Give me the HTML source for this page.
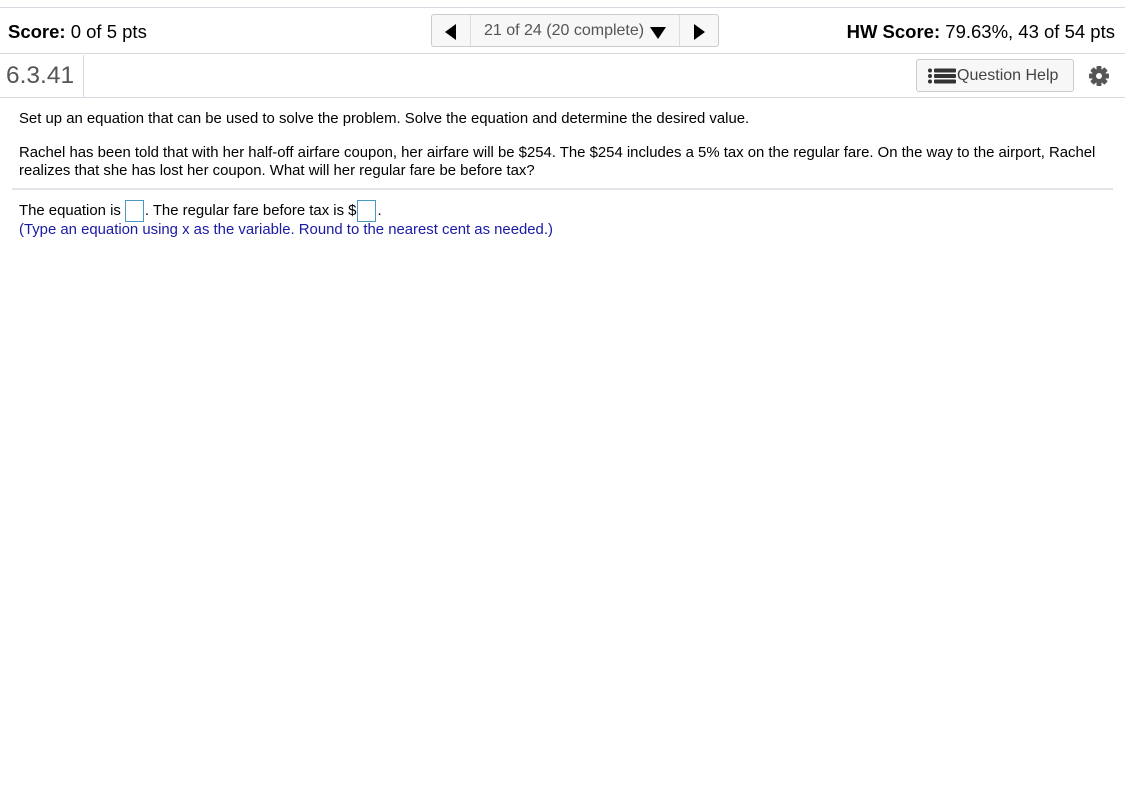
<!DOCTYPE html>
<html><head><meta charset="utf-8"><style>
body{margin:0;width:1125px;height:811px;background:#fff;font-family:"Liberation Sans",Arial,sans-serif;position:relative;overflow:hidden;color:#000}
.a{position:absolute;white-space:nowrap}
.hl{position:absolute;left:0;width:1125px;height:1px;background:#d5d9e0}
.box{display:inline-block;width:19px;height:22px;border:1px solid #4a98c0;vertical-align:-7px;box-sizing:border-box;margin:0 1px}
</style></head><body>
<div class="hl" style="top:7px"></div>
<div class="a" style="left:8px;top:21px;font-size:18.5px"><b>Score:</b> 0 of 5 pts</div>
<div class="a" style="left:431px;top:14px;width:288px;height:33px;border:1px solid #ccc;border-radius:3px;background:#f7f7f7;box-sizing:border-box"></div>
<div class="a" style="left:470px;top:15px;width:1px;height:31px;background:#ddd"></div>
<div class="a" style="left:679px;top:15px;width:1px;height:31px;background:#ddd"></div>
<svg class="a" style="left:445px;top:24px" width="12" height="16"><path d="M11 0V16L0 8Z"/></svg>
<div class="a" style="left:484px;top:22px;font-size:16px;color:#555">21 of 24 (20 complete)</div>
<svg class="a" style="left:650px;top:27px" width="16" height="12"><path d="M0 0H16L8 12Z"/></svg>
<svg class="a" style="left:694px;top:24px" width="12" height="16"><path d="M0 0V16L11 8Z"/></svg>
<div class="a" style="right:10px;top:21px;font-size:18.5px"><b>HW Score:</b> 79.63%, 43 of 54 pts</div>
<div class="hl" style="top:53px"></div>
<div class="a" style="left:6px;top:62px;font-size:24.5px;color:#555">6.3.41</div>
<div class="a" style="left:83px;top:55px;width:1px;height:42px;background:#d5d9e0"></div>
<div class="a" style="left:916px;top:59px;width:158px;height:33px;border:1px solid #ccc;border-radius:3px;background:#f7f7f7;box-sizing:border-box"></div>
<svg class="a" style="left:928px;top:68px" width="28" height="16"><g fill="#333"><circle cx="2" cy="2.5" r="2"/><circle cx="2" cy="8" r="2"/><circle cx="2" cy="13.5" r="2"/><rect x="6" y="0.5" width="22" height="4" rx="1"/><rect x="6" y="6" width="22" height="4" rx="1"/><rect x="6" y="11.5" width="22" height="4" rx="1"/></g></svg>
<div class="a" style="left:957px;top:67px;font-size:16px;color:#444">Question Help</div>
<svg class="a" style="left:1088px;top:65px" width="22" height="22" viewBox="0 0 22 22"><g fill="#555" transform="translate(11 11)"><rect x="-2.5" y="-10" width="5" height="20" rx="1"/><rect x="-2.5" y="-10" width="5" height="20" rx="1" transform="rotate(45)"/><rect x="-2.5" y="-10" width="5" height="20" rx="1" transform="rotate(90)"/><rect x="-2.5" y="-10" width="5" height="20" rx="1" transform="rotate(135)"/><circle r="7"/></g><circle cx="11" cy="11" r="3" fill="#fff"/></svg>
<div class="hl" style="top:97px"></div>
<div class="a" style="left:19px;top:111px;font-size:14.9px">Set up an equation that can be used to solve the problem. Solve the equation and determine the desired value.</div>
<div class="a" style="left:19px;top:144px;font-size:14.9px;line-height:18px">Rachel has been told that with her half-off airfare coupon, her airfare will be $254. The $254 includes a 5% tax on the regular fare. On the way to the airport, Rachel<br>realizes that she has lost her coupon. What will her regular fare be before tax?</div>
<div class="a" style="left:12px;top:188px;width:1101px;height:2px;background:#e2e5ea"></div>
<div class="a" style="left:19px;top:200px;font-size:14.9px">The equation is<span class="box" style="margin-left:4px"></span>. The regular fare before tax is $<span class="box"></span>.</div>
<div class="a" style="left:19px;top:222px;font-size:14.9px;color:#1a1aa6">(Type an equation using x as the variable. Round to the nearest cent as needed.)</div>
</body></html>
